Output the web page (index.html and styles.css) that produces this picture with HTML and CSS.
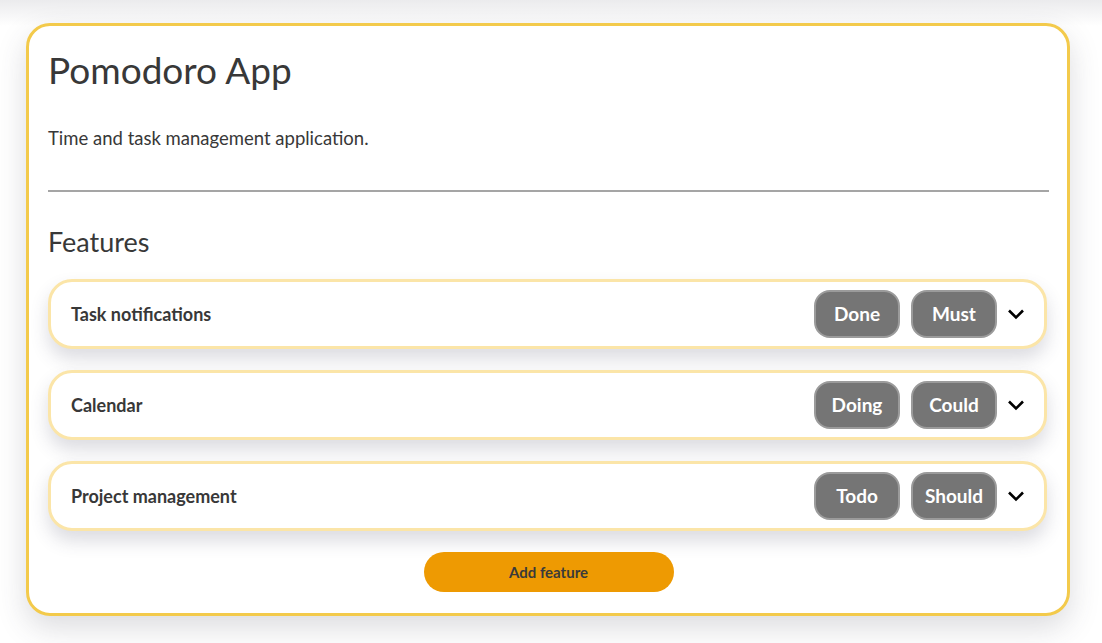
FILE: index.html
```html
<!DOCTYPE html>
<html>
<head>
<meta charset="utf-8">
<link rel="stylesheet" href="styles.css">
</head>
<body>
<main class="page">
  <section class="card">
    <h1 class="title">Pomodoro App</h1>
    <p class="desc">Time and task management application.</p>
    <hr class="divider">
    <h2 class="section-title">Features</h2>
    <div class="features">
      <div class="feature">
        <span class="feature-name">Task notifications</span>
        <div class="feature-tags">
          <span class="badge">Done</span>
          <span class="badge">Must</span>
          <svg class="chevron" viewBox="0 0 20 20" width="20" height="20"><path d="M3 6.5 L10 13.5 L17 6.5" fill="none" stroke="#000" stroke-width="2.6"/></svg>
        </div>
      </div>
      <div class="feature">
        <span class="feature-name">Calendar</span>
        <div class="feature-tags">
          <span class="badge">Doing</span>
          <span class="badge">Could</span>
          <svg class="chevron" viewBox="0 0 20 20" width="20" height="20"><path d="M3 6.5 L10 13.5 L17 6.5" fill="none" stroke="#000" stroke-width="2.6"/></svg>
        </div>
      </div>
      <div class="feature">
        <span class="feature-name">Project management</span>
        <div class="feature-tags">
          <span class="badge">Todo</span>
          <span class="badge">Should</span>
          <svg class="chevron" viewBox="0 0 20 20" width="20" height="20"><path d="M3 6.5 L10 13.5 L17 6.5" fill="none" stroke="#000" stroke-width="2.6"/></svg>
        </div>
      </div>
    </div>
    <div class="actions">
      <button class="add-btn">Add feature</button>
    </div>
  </section>
</main>
</body>
</html>
```

FILE: styles.css
```css
* { box-sizing: border-box; }
html, body { margin: 0; height: 100%; }
body {
  background: linear-gradient(#ebebed, #ffffff 26px);
  font-family: Lato, "Open Sans", sans-serif;
  color: #383838;
}
.page {
  padding: 23px 32px 0 26px;
}
.card {
  width: 1044px;
  border: 3px solid #f3ca4b;
  border-radius: 24px;
  background: #fff;
  padding: 22px 18px 21px 19px;
  box-shadow: 0 12px 30px rgba(60, 60, 80, 0.18);
}
.title {
  margin: 0;
  font-size: 37px;
  font-weight: 400;
  line-height: 1.2;
}
.desc {
  margin: 35px 0 0;
  font-size: 18.5px;
  line-height: 1.2;
}
.divider {
  margin: 40px 0 0;
  border: 0;
  height: 2px;
  background: #a5a5a5;
}
.section-title {
  margin: 34px 0 0;
  font-size: 27px;
  font-weight: 400;
  line-height: 1.2;
}
.features {
  margin-top: 21px;
  display: flex;
  flex-direction: column;
  gap: 21px;
  padding-right: 2px;
}
.feature {
  height: 70px;
  border: 3px solid #fbe5a8;
  border-radius: 24px;
  background: #fff;
  display: flex;
  align-items: center;
  justify-content: space-between;
  padding: 0 18px 0 20px;
  box-shadow: 0 10px 18px rgba(60, 60, 90, 0.18);
}
.feature-name {
  font-weight: 700;
  font-size: 18px;
}
.feature-tags {
  display: flex;
  align-items: center;
  gap: 11px;
}
.badge {
  width: 86px;
  height: 48px;
  border: 2px solid #9b9b9b;
  border-radius: 16px;
  background: #757575;
  color: #fff;
  font-weight: 700;
  font-size: 19px;
  display: flex;
  align-items: center;
  justify-content: center;
}
.chevron {
  display: block;
  margin-left: -2px;
}
.actions {
  margin-top: 21px;
  display: flex;
  justify-content: center;
}
.add-btn {
  width: 250px;
  height: 40px;
  border: 0;
  border-radius: 20px;
  background: #ee9a02;
  color: #3a3a3a;
  font-family: Lato, "Open Sans", sans-serif;
  font-weight: 700;
  font-size: 15px;
}
```
